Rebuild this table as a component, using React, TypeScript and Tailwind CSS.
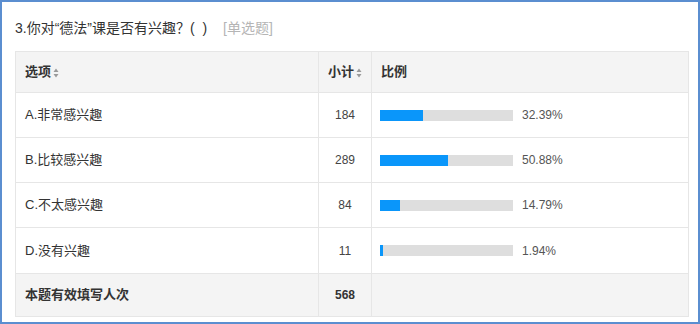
import React from 'react';

const rows = [
  { label: 'A.非常感兴趣', count: 184, pct: 32.39 },
  { label: 'B.比较感兴趣', count: 289, pct: 50.88 },
  { label: 'C.不太感兴趣', count: 84, pct: 14.79 },
  { label: 'D.没有兴趣', count: 11, pct: 1.94 },
];

function SortIcon() {
  return (
    <svg width="6" height="10" viewBox="0 0 6 10" className="ml-[2px] inline-block">
      <path d="M3 0.5 L5.5 4 L0.5 4 Z" fill="#9a9a9a" />
      <path d="M3 9.5 L5.5 6 L0.5 6 Z" fill="#9a9a9a" />
    </svg>
  );
}

export default function App() {
  return (
    <div
      className="w-[700px] h-[324px] bg-white border-2 border-[#5b8ed0] text-[#333]"
      style={{ fontFamily: '"Liberation Sans", "Noto Sans CJK SC", sans-serif' }}
    >
      {/* 标题 */}
      <div className="h-[49px] pl-[13px] pt-[16px] text-[14px] leading-[20px]">
        <span>3.你对“德法”课是否有兴趣？(&nbsp; )</span>
        <span className="ml-[16px] text-[#b5b5b5]">[单选题]</span>
      </div>

      <table className="ml-[13px] w-[673px] table-fixed border-collapse text-[13px]">
        <colgroup>
          <col className="w-[303px]" />
          <col className="w-[53px]" />
          <col className="w-[317px]" />
        </colgroup>
        <thead>
          <tr className="h-[41px] bg-[#f4f4f4] font-bold">
            <td className="border border-[#e6e6e6] pl-[9px]">
              选项<SortIcon />
            </td>
            <td className="border border-[#e6e6e6] text-center">
              小计<SortIcon />
            </td>
            <td className="border border-[#e6e6e6] pl-[9px]">比例</td>
          </tr>
        </thead>
        <tbody>
          {rows.map((r, i) => (
            <tr key={r.label} className={i === 3 ? 'h-[46px]' : 'h-[45px]'}>
              <td className="border border-[#e6e6e6] pl-[9px]">{r.label}</td>
              <td className="border border-[#e6e6e6] text-center text-[12px] text-[#444]">{r.count}</td>
              <td className="border border-[#e6e6e6] pl-[8px]">
                <div className="flex items-center">
                  <div className="h-[11px] w-[133px] bg-[#dedede]">
                    <div className="h-full bg-[#0a96fa]" style={{ width: `${Math.max(r.pct, 1.5)}%` }} />
                  </div>
                  <span className="ml-[9px] text-[12px] text-[#555]">{r.pct.toFixed(2)}%</span>
                </div>
              </td>
            </tr>
          ))}
          <tr className="h-[43px] bg-[#f4f4f4] font-bold">
            <td className="border border-[#e6e6e6] pl-[9px]">本题有效填写人次</td>
            <td className="border border-[#e6e6e6] text-center text-[12px]">568</td>
            <td className="border border-[#e6e6e6]" />
          </tr>
        </tbody>
      </table>
    </div>
  );
}
